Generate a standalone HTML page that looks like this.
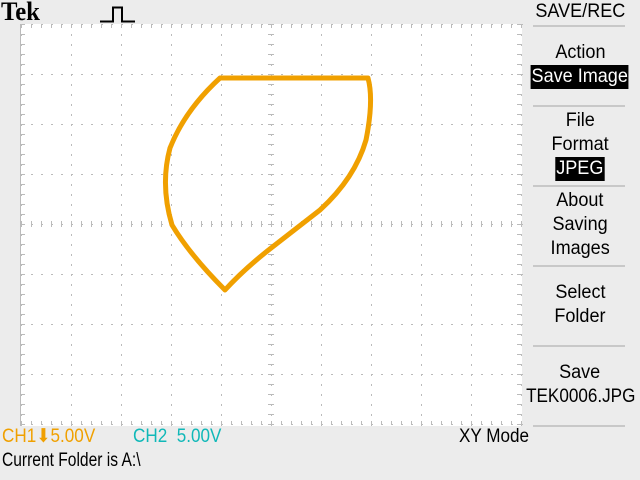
<!DOCTYPE html>
<html><head><style>
body{margin:0;width:640px;height:480px;background:#ececec;position:relative;overflow:hidden;font-family:"Liberation Sans",sans-serif;}
.t{position:absolute;font-size:19px;line-height:22px;transform-origin:0 0;transform:scaleX(0.9);white-space:nowrap;color:#000}
.m{position:absolute;left:520px;width:120px;text-align:center;font-size:19px;line-height:24px;white-space:nowrap}
.m span{display:inline-block;transform:scaleX(0.95);}
.inv{background:#000;color:#fff;padding:0 1px}
.sep{position:absolute;left:533px;width:92px;height:2px;background:#c8c8c8}
</style></head><body>
<div style="position:absolute;left:1px;top:-1px;font-family:'Liberation Serif',serif;font-weight:bold;font-size:26px;line-height:26px;transform:scaleX(0.95);transform-origin:0 0">Tek</div>
<svg style="position:absolute;left:0;top:0" width="640" height="480">
<path d="M100 21.5H113V7.5H122V21.5H135" stroke="#000" stroke-width="2" fill="none"/>
<rect x="20" y="24" width="502" height="402" fill="#fff"/>
<g id="g" fill="#bbb"></g>
<path d="M220 78 L368 78 Q374 100 366 140 Q355 178 320 210 L275 245 Q245 268 225 290 Q190 255 172 225 Q160 185 170 148 Q185 110 220 78 Z" stroke="#f0a000" stroke-width="5" fill="none" stroke-linejoin="round"/>
</svg>
<script>
var g=document.getElementById('g'),s='';
function r(x,y,w,h){s+='<rect x="'+x+'" y="'+y+'" width="'+w+'" height="'+h+'"/>';}
for(var i=0;i<=10;i++){var x=21+i*50;for(var y=24;y<=424;y+=10)r(x,y,1,2);}
for(var j=0;j<=8;j++){var y=24+j*50;for(var x=21;x<=521;x+=10)r(x,y,2,1);}
for(var x=21;x<=521;x+=10){r(x,24,1,4);r(x,421,1,4);r(x,221,1,6);}
for(var y=24;y<=424;y+=10){r(21,y,4,1);r(517,y,4,1);r(268,y,6,1);}
r(20,24,1,402);
g.innerHTML=s;
</script>
<div class="m" style="top:0"><span>SAVE/REC</span></div>
<div class="sep" style="top:25px"></div>
<div class="m" style="top:41px"><span>Action</span><br><span class="inv">Save Image</span></div>
<div class="sep" style="top:105px"></div>
<div class="m" style="top:109px"><span>File</span><br><span>Format</span><br><span class="inv">JPEG</span></div>
<div class="sep" style="top:185px"></div>
<div class="m" style="top:189px"><span>About</span><br><span>Saving</span><br><span>Images</span></div>
<div class="sep" style="top:265px"></div>
<div class="m" style="top:281px"><span>Select</span><br><span>Folder</span></div>
<div class="sep" style="top:345px"></div>
<div class="m" style="top:361px"><span>Save</span><br><span style="transform:scaleX(0.9)">TEK0006.JPG</span></div>
<div class="sep" style="top:425px"></div>
<div class="t" style="left:2px;top:426px;color:#f0a000">CH1&#x2B07;5.00V</div>
<div class="t" style="left:133px;top:426px;color:#10b8b8">CH2&nbsp; 5.00V</div>
<div class="t" style="left:459px;top:426px">XY Mode</div>
<div class="t" style="left:2px;top:450px;transform:scaleX(0.82)">Current Folder is A:\</div>
</body></html>
